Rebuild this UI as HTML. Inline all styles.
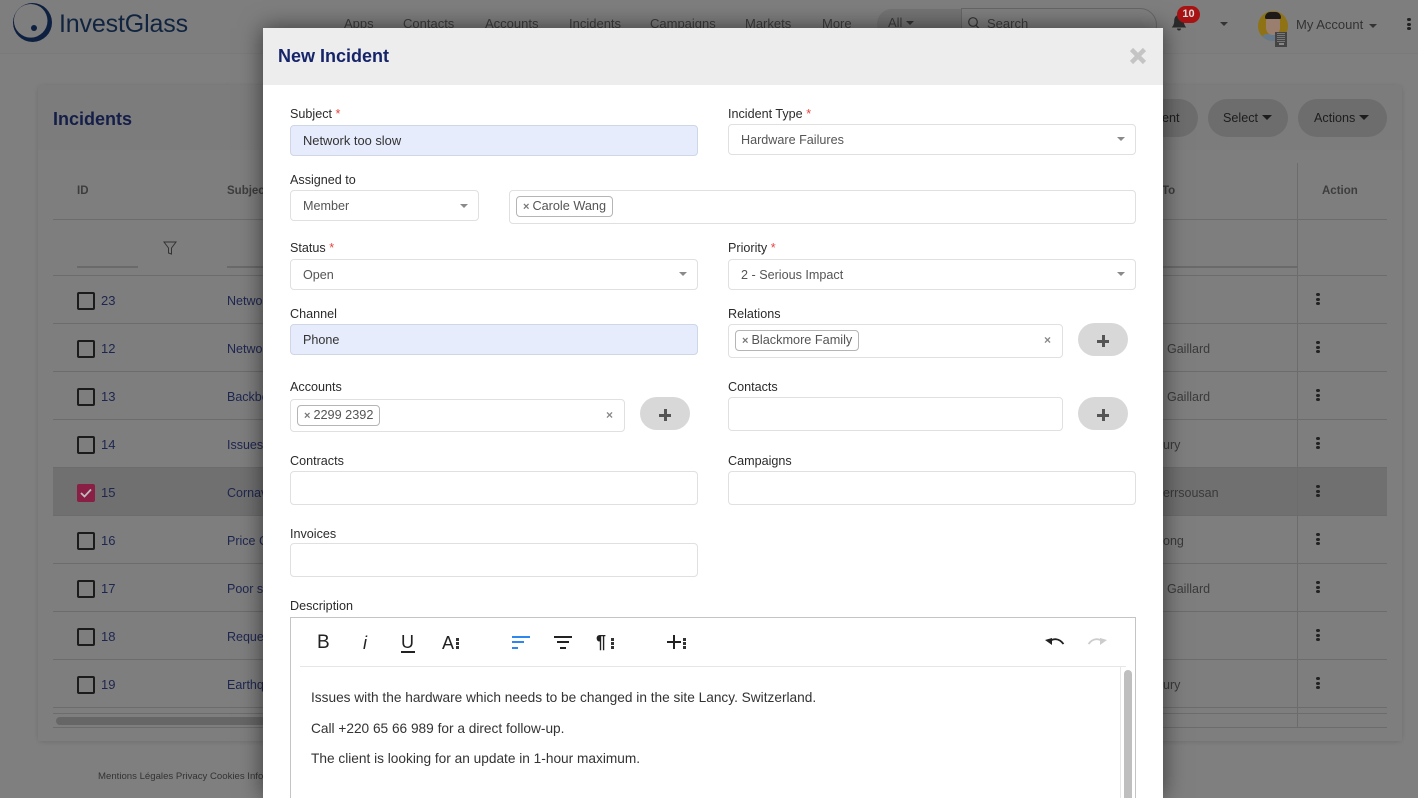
<!DOCTYPE html>
<html><head><meta charset="utf-8"><title>New Incident</title>
<style>
*{box-sizing:border-box}
html,body{margin:0;padding:0;width:1418px;height:798px;overflow:hidden;background:#7f7f7f;font-family:"Liberation Sans",sans-serif}
.t{position:absolute;white-space:nowrap;line-height:16px;font-size:13px}
.b{position:absolute}
.nav{color:#3c3c3c;font-size:13px;top:16px}
.ln{position:absolute;left:53px;width:1334px;height:1px;background:#6c6c6c}
.cb{position:absolute;left:77px;width:18px;height:18px;border:2px solid #1b1b1b;border-radius:2px}
.id{color:#1e2650;font-size:13px;left:101px}
.sub{color:#1e2650;font-size:12.5px;left:227px}
.to{color:#3a3a3a;font-size:12.5px}
.dots{position:absolute;left:1316px;width:4px;height:12px}
.dots i,.kb i{display:block;width:3.5px;height:3px;background:#222;border-radius:50%;margin-bottom:1.5px}
#m{position:absolute;left:263px;top:28px;width:900px;height:770px;background:#fff;box-shadow:0 0 22px rgba(0,0,0,.55);overflow:hidden}
#mh{position:absolute;left:0;top:0;width:900px;height:57px;background:#ededed}
.l{position:absolute;font-size:12.6px;line-height:16px;color:#2b2b2b;white-space:nowrap}
.l u{text-decoration:none;color:#e8413c}
.f{position:absolute;background:#fff;border:1px solid #e0e0e0;border-radius:4px;font-size:12.6px;color:#555;line-height:16px;white-space:nowrap}
.f.blue{background:#e6ecfb;border-color:#cfd6e6;color:#333}
.f span.v{position:absolute;left:12px;top:7px}
.ar{position:absolute;width:0;height:0;border-left:4.5px solid transparent;border-right:4.5px solid transparent;border-top:4.5px solid #8a8a8a}
.tag{position:absolute;left:6px;top:5px;height:21px;border:1px solid #b5b5b5;border-radius:4px;padding:0 6px 0 6px;line-height:19px;font-size:12.7px;color:#555;white-space:nowrap}
.tag b{color:#777;font-size:11px;margin-right:3px}
.clr{position:absolute;color:#888;font-size:12px;font-weight:bold;line-height:14px}
.pl{position:absolute;width:50px;height:33px;border-radius:17px;background:#d8d8d8}
.pl:before{content:"";position:absolute;left:19px;top:16.500px;width:12px;height:3px;background:#555}
.pl:after{content:"";position:absolute;left:23.500px;top:12px;width:3px;height:12px;background:#555}
.pill{position:absolute;top:99px;height:38px;border-radius:19px;background:#6d6d6d;color:#1d1d1d;font-size:12.6px;line-height:38px;white-space:nowrap}
.c{display:inline-block;width:0;height:0;border-left:5px solid transparent;border-right:5px solid transparent;border-top:5px solid #1d1d1d;vertical-align:2px;margin-left:4px}
.kb{position:absolute;width:3px}
.kb i{width:2.500px;height:2.500px;margin-bottom:1.500px;border-radius:0;background:#333}
.p{position:absolute;left:20px;font-size:13.680px;line-height:18px;color:#333;white-space:nowrap}
</style></head>
<body>
<!-- top bar -->
<div class="b" style="left:0;top:0;width:1418px;height:54px;background:#7e7e7e;border-bottom:1px solid #7a7a7a"></div>
<svg class="b" style="left:12px;top:2px" width="42" height="42" viewBox="0 0 42 42"><circle cx="20.500" cy="20.500" r="19.500" fill="#0e2040"/><circle cx="18.700" cy="18.800" r="16.800" fill="#7e7e7e"/><circle cx="22" cy="26" r="3" fill="#0e2040"/></svg>
<div class="t" style="left:59px;top:8px;font-size:25px;line-height:32px;color:#10243f;letter-spacing:-.15px">InvestGlass</div>
<div class="t nav" style="left:344px">Apps</div>
<div class="t nav" style="left:403px">Contacts</div>
<div class="t nav" style="left:485px">Accounts</div>
<div class="t nav" style="left:569px">Incidents</div>
<div class="t nav" style="left:650px">Campaigns</div>
<div class="t nav" style="left:745px">Markets</div>
<div class="t nav" style="left:822px">More</div>
<div class="b" style="left:877px;top:9px;width:90px;height:30px;border-radius:15px 0 0 15px;background:#747474"></div>
<div class="t nav" style="left:888px;top:15px">All</div>
<div class="b" style="left:906px;top:21px;border-left:4px solid transparent;border-right:4px solid transparent;border-top:4px solid #333"></div>
<div class="b" style="left:961px;top:8px;width:196px;height:34px;border:1px solid #666;border-radius:0 17px 17px 0;background:#7f7f7f"></div>
<svg class="b" style="left:967px;top:16px" width="14" height="14" viewBox="0 0 14 14"><circle cx="6" cy="6" r="4.300" fill="none" stroke="#333" stroke-width="1.200"/><path d="M9 9.300L12 12.500" stroke="#333" stroke-width="1.200"/></svg>
<div class="t nav" style="left:987px;top:16px">Search</div>
<svg class="b" style="left:1171px;top:14px" width="16" height="18" viewBox="0 0 16 18"><path d="M8 1C4.500 1 3.200 4 3.200 7C3.200 10 2 12 .8 13.500H15.200C14 12 12.800 10 12.800 7C12.800 4 11.500 1 8 1ZM6 14.500A2 2 0 0 0 10 14.500Z" fill="#2a2a2a"/></svg>
<div class="b" style="left:1177px;top:6px;width:23px;height:17px;border-radius:9px;background:#a81212;color:#ddd;font-size:11px;font-weight:bold;line-height:17px;text-align:center">10</div>
<div class="b" style="left:1220px;top:22px;border-left:4px solid transparent;border-right:4px solid transparent;border-top:4px solid #333"></div>
<div class="b" style="left:1258px;top:11px;width:30px;height:30px;border-radius:50%;background:#8f7214;overflow:hidden">
 <div class="b" style="left:3px;top:23px;width:22px;height:10px;background:#66798c;border-radius:6px 6px 0 0"></div>
 <div class="b" style="left:7.500px;top:4px;width:14px;height:20px;border-radius:7px 7px 8px 8px;background:#9a7f6e"></div>
 <div class="b" style="left:6.500px;top:1px;width:16px;height:7px;border-radius:7px 7px 2px 2px;background:#1d1a18"></div>
</div>
<div class="b" style="left:1275px;top:32px;width:12px;height:15px;background:#444"><div class="b" style="left:2px;top:1px;width:8px;height:9px;background:repeating-linear-gradient(0deg,#777 0 1px,#444 1px 2px)"></div><div class="b" style="left:3.500px;top:11px;width:5px;height:2px;background:#888"></div></div>
<div class="t nav" style="left:1296px;top:17px;color:#333">My Account</div>
<div class="b" style="left:1369px;top:24px;border-left:4px solid transparent;border-right:4px solid transparent;border-top:4px solid #333"></div>
<div class="dots" style="left:1407px;top:18px"><i></i><i></i><i></i></div>

<!-- panel -->
<div class="b" style="left:38px;top:85px;width:1364px;height:656px;background:#7c7c7c;border-radius:4px;box-shadow:0 1px 5px rgba(0,0,0,.12)"></div>
<div class="b" style="left:38px;top:150px;width:1364px;height:591px;background:#7e7e7e"></div>
<div class="t" style="left:53px;top:108px;font-size:18px;line-height:22px;font-weight:bold;color:#141e48">Incidents</div>
<div class="pill" style="left:1110px;width:88px;padding-left:52px">ent</div>
<div class="pill" style="left:1208px;width:80px;padding-left:15px">Select<span class="c"></span></div>
<div class="pill" style="left:1298px;width:89px;padding-left:16px">Actions<span class="c"></span></div>

<div class="b" style="left:53px;top:467px;width:1334px;height:48px;background:#707070"></div>
<div class="ln" style="top:219px"></div><div class="ln" style="top:275px"></div><div class="ln" style="top:323px"></div><div class="ln" style="top:371px"></div><div class="ln" style="top:419px"></div><div class="ln" style="top:467px"></div><div class="ln" style="top:515px"></div><div class="ln" style="top:563px"></div><div class="ln" style="top:611px"></div><div class="ln" style="top:659px"></div><div class="ln" style="top:707px"></div><div class="ln" style="top:713px"></div><div class="ln" style="top:727px"></div>
<div class="b" style="left:1297px;top:163px;width:1px;height:565px;background:#6c6c6c"></div>
<div class="b" style="left:77px;top:266px;width:61px;height:2px;background:#6a6a6a"></div>
<div class="b" style="left:227px;top:266px;width:1071px;height:2px;background:#6a6a6a"></div>
<div class="b" style="left:56px;top:717px;width:260px;height:8px;border-radius:4px;background:#666"></div>

<div class="t" style="left:77px;top:183px;font-size:11.500px;font-weight:bold;color:#3d3d3d">ID</div>
<div class="t" style="left:227px;top:183px;font-size:11.500px;font-weight:bold;color:#3d3d3d">Subject</div>
<div class="t" style="left:1162px;top:183px;font-size:11.500px;font-weight:bold;color:#3d3d3d">To</div>
<div class="t" style="left:1322px;top:183px;font-size:11.500px;font-weight:bold;color:#3d3d3d">Action</div>
<svg class="b" style="left:163px;top:241px" width="14" height="14" viewBox="0 0 14 14"><path d="M1 1H13L8.500 7V13L5.500 12V7Z" fill="none" stroke="#333" stroke-width="1"/></svg>

<div class="cb" style="top:292px"></div><div class="t id" style="top:293px">23</div><div class="t sub" style="top:293px">Network</div><div class="dots" style="top:293px"><i></i><i></i><i></i></div>
<div class="cb" style="top:340px"></div><div class="t id" style="top:341px">12</div><div class="t sub" style="top:341px">Network</div><div class="dots" style="top:341px"><i></i><i></i><i></i></div><div class="t to" style="left:1167px;top:341px">Gaillard</div>
<div class="cb" style="top:388px"></div><div class="t id" style="top:389px">13</div><div class="t sub" style="top:389px">Backbone</div><div class="dots" style="top:389px"><i></i><i></i><i></i></div><div class="t to" style="left:1167px;top:389px">Gaillard</div>
<div class="cb" style="top:436px"></div><div class="t id" style="top:437px">14</div><div class="t sub" style="top:437px">Issues</div><div class="dots" style="top:437px"><i></i><i></i><i></i></div><div class="t to" style="left:1163px;top:437px">ury</div>
<div class="cb" style="top:484px;background:#8a1f45;border-color:#8a1f45"><svg style="position:absolute;left:1px;top:2px" width="12" height="10" viewBox="0 0 12 10"><path d="M1 5L4.500 8.500L11 1.500" fill="none" stroke="#bdbdbd" stroke-width="1.800"/></svg></div><div class="t id" style="top:485px">15</div><div class="t sub" style="top:485px">Cornavin</div><div class="dots" style="top:485px"><i></i><i></i><i></i></div><div class="t to" style="left:1163px;top:485px">errsousan</div>
<div class="cb" style="top:532px"></div><div class="t id" style="top:533px">16</div><div class="t sub" style="top:533px">Price C</div><div class="dots" style="top:533px"><i></i><i></i><i></i></div><div class="t to" style="left:1163px;top:533px">ong</div>
<div class="cb" style="top:580px"></div><div class="t id" style="top:581px">17</div><div class="t sub" style="top:581px">Poor s</div><div class="dots" style="top:581px"><i></i><i></i><i></i></div><div class="t to" style="left:1167px;top:581px">Gaillard</div>
<div class="cb" style="top:628px"></div><div class="t id" style="top:629px">18</div><div class="t sub" style="top:629px">Request</div><div class="dots" style="top:629px"><i></i><i></i><i></i></div>
<div class="cb" style="top:676px"></div><div class="t id" style="top:677px">19</div><div class="t sub" style="top:677px">Earthq</div><div class="dots" style="top:677px"><i></i><i></i><i></i></div><div class="t to" style="left:1163px;top:677px">ury</div>
<div class="t" style="left:98px;top:769px;font-size:9.600px;color:#333">Mentions Légales Privacy Cookies Info</div>

<!-- modal -->
<div id="m">
<div id="mh"></div>
<div class="t" style="left:15px;top:17px;font-size:18px;line-height:22px;font-weight:bold;color:#16246a">New Incident</div>
<svg class="b" style="left:866px;top:19px" width="18" height="18" viewBox="0 0 18 18"><path d="M2.500 2.500L15.500 15.500M15.500 2.500L2.500 15.500" stroke="#c4c4c4" stroke-width="4.500"/></svg>

<div class="l" style="left:27px;top:78px">Subject <u>*</u></div>
<div class="f blue" style="left:27px;top:97px;width:408px;height:31px"><span class="v" style="font-size:12.900px">Network too slow</span></div>
<div class="l" style="left:465px;top:78px">Incident Type <u>*</u></div>
<div class="f" style="left:465px;top:96px;width:408px;height:31px"><span class="v">Hardware Failures</span><div class="ar" style="right:10px;top:12px"></div></div>

<div class="l" style="left:27px;top:144px">Assigned to</div>
<div class="f" style="left:27px;top:162px;width:189px;height:31px"><span class="v">Member</span><div class="ar" style="right:10px;top:13px"></div></div>
<div class="f" style="left:246px;top:162px;width:627px;height:34px"><div class="tag"><b>×</b>Carole Wang</div></div>

<div class="l" style="left:27px;top:212px">Status <u>*</u></div>
<div class="f" style="left:27px;top:231px;width:408px;height:31px"><span class="v">Open</span><div class="ar" style="right:10px;top:12px"></div></div>
<div class="l" style="left:465px;top:212px">Priority <u>*</u></div>
<div class="f" style="left:465px;top:231px;width:408px;height:31px"><span class="v">2 - Serious Impact</span><div class="ar" style="right:10px;top:12px"></div></div>

<div class="l" style="left:27px;top:278px">Channel</div>
<div class="f blue" style="left:27px;top:296px;width:408px;height:31px"><span class="v">Phone</span></div>
<div class="l" style="left:465px;top:278px">Relations</div>
<div class="f" style="left:465px;top:296px;width:335px;height:34px"><div class="tag"><b>×</b>Blackmore Family</div><div class="clr" style="right:11px;top:8px">×</div></div>
<div class="pl" style="left:815px;top:295px"></div>

<div class="l" style="left:27px;top:351px">Accounts</div>
<div class="f" style="left:27px;top:371px;width:335px;height:33px"><div class="tag"><b>×</b>2299 2392</div><div class="clr" style="right:11px;top:8px">×</div></div>
<div class="pl" style="left:377px;top:369px"></div>
<div class="l" style="left:465px;top:351px">Contacts</div>
<div class="f" style="left:465px;top:369px;width:335px;height:34px"></div>
<div class="pl" style="left:815px;top:369px"></div>

<div class="l" style="left:27px;top:425px">Contracts</div>
<div class="f" style="left:27px;top:443px;width:408px;height:34px"></div>
<div class="l" style="left:465px;top:425px">Campaigns</div>
<div class="f" style="left:465px;top:443px;width:408px;height:34px"></div>

<div class="l" style="left:27px;top:498px">Invoices</div>
<div class="f" style="left:27px;top:515px;width:408px;height:34px"></div>

<div class="l" style="left:27px;top:570px">Description</div>
<div class="b" style="left:27px;top:589px;width:846px;height:200px;border:1px solid #c4c4c4;background:#fff">
 <div class="b" style="left:9px;top:48px;width:826px;height:1px;background:#e6e6e6"></div>
 <div class="t" style="left:26px;top:15px;font-size:19px;line-height:20px;color:#222">B</div>
 <div class="t" style="left:72px;top:15px;font-size:18px;line-height:20px;font-style:italic;color:#222">i</div>
 <div class="t" style="left:110px;top:14px;font-size:18px;line-height:20px;color:#222">U</div>
 <div class="b" style="left:110px;top:33px;width:14px;height:2px;background:#222"></div>
 <div class="t" style="left:151px;top:15px;font-size:18px;line-height:20px;color:#222">A</div>
 <div class="kb" style="left:165px;top:20px"><i></i><i></i><i></i></div>
 <div class="b" style="left:221px;top:18px;width:18px;height:2px;background:#2f86ef"></div><div class="b" style="left:221px;top:23px;width:12px;height:2px;background:#2f86ef"></div><div class="b" style="left:221px;top:29px;width:6px;height:2px;background:#2f86ef"></div>
 <div class="b" style="left:263px;top:18px;width:18px;height:2px;background:#222"></div><div class="b" style="left:266px;top:23px;width:12px;height:2px;background:#222"></div><div class="b" style="left:269px;top:29px;width:6px;height:2px;background:#222"></div>
 <div class="t" style="left:305px;top:14px;font-size:18px;line-height:20px;font-weight:bold;color:#222">¶</div>
 <div class="kb" style="left:320px;top:20px"><i></i><i></i><i></i></div>
 <div class="b" style="left:376px;top:23px;width:14px;height:2px;background:#222"></div><div class="b" style="left:382px;top:17px;width:2px;height:14px;background:#222"></div>
 <div class="kb" style="left:392px;top:20px"><i></i><i></i><i></i></div>
 <svg class="b" style="left:754px;top:18px" width="20" height="12" viewBox="0 0 20 12"><path d="M4 6C8 2 14 2 18.500 8" fill="none" stroke="#222" stroke-width="1.800"/><path d="M0 4L7 2V9Z" fill="#222"/></svg>
 <svg class="b" style="left:796px;top:18px" width="20" height="12" viewBox="0 0 20 12"><path d="M16 6C12 2 6 2 1.500 8" fill="none" stroke="#ccc" stroke-width="1.800"/><path d="M20 4L13 2V9Z" fill="#ccc"/></svg>
 <div class="b" style="left:829px;top:49px;width:1px;height:150px;background:#e6e6e6"></div>
 <div class="b" style="left:833px;top:52px;width:8px;height:150px;border-radius:4px 4px 0 0;background:#bfbfbf"></div>
 <div class="p" style="top:71px">Issues with the hardware which needs to be changed in the site Lancy. Switzerland.</div>
 <div class="p" style="top:102px">Call +220 65 66 989 for a direct follow-up.</div>
 <div class="p" style="top:132px">The client is looking for an update in 1-hour maximum.</div>
</div>
</div>
</body></html>
